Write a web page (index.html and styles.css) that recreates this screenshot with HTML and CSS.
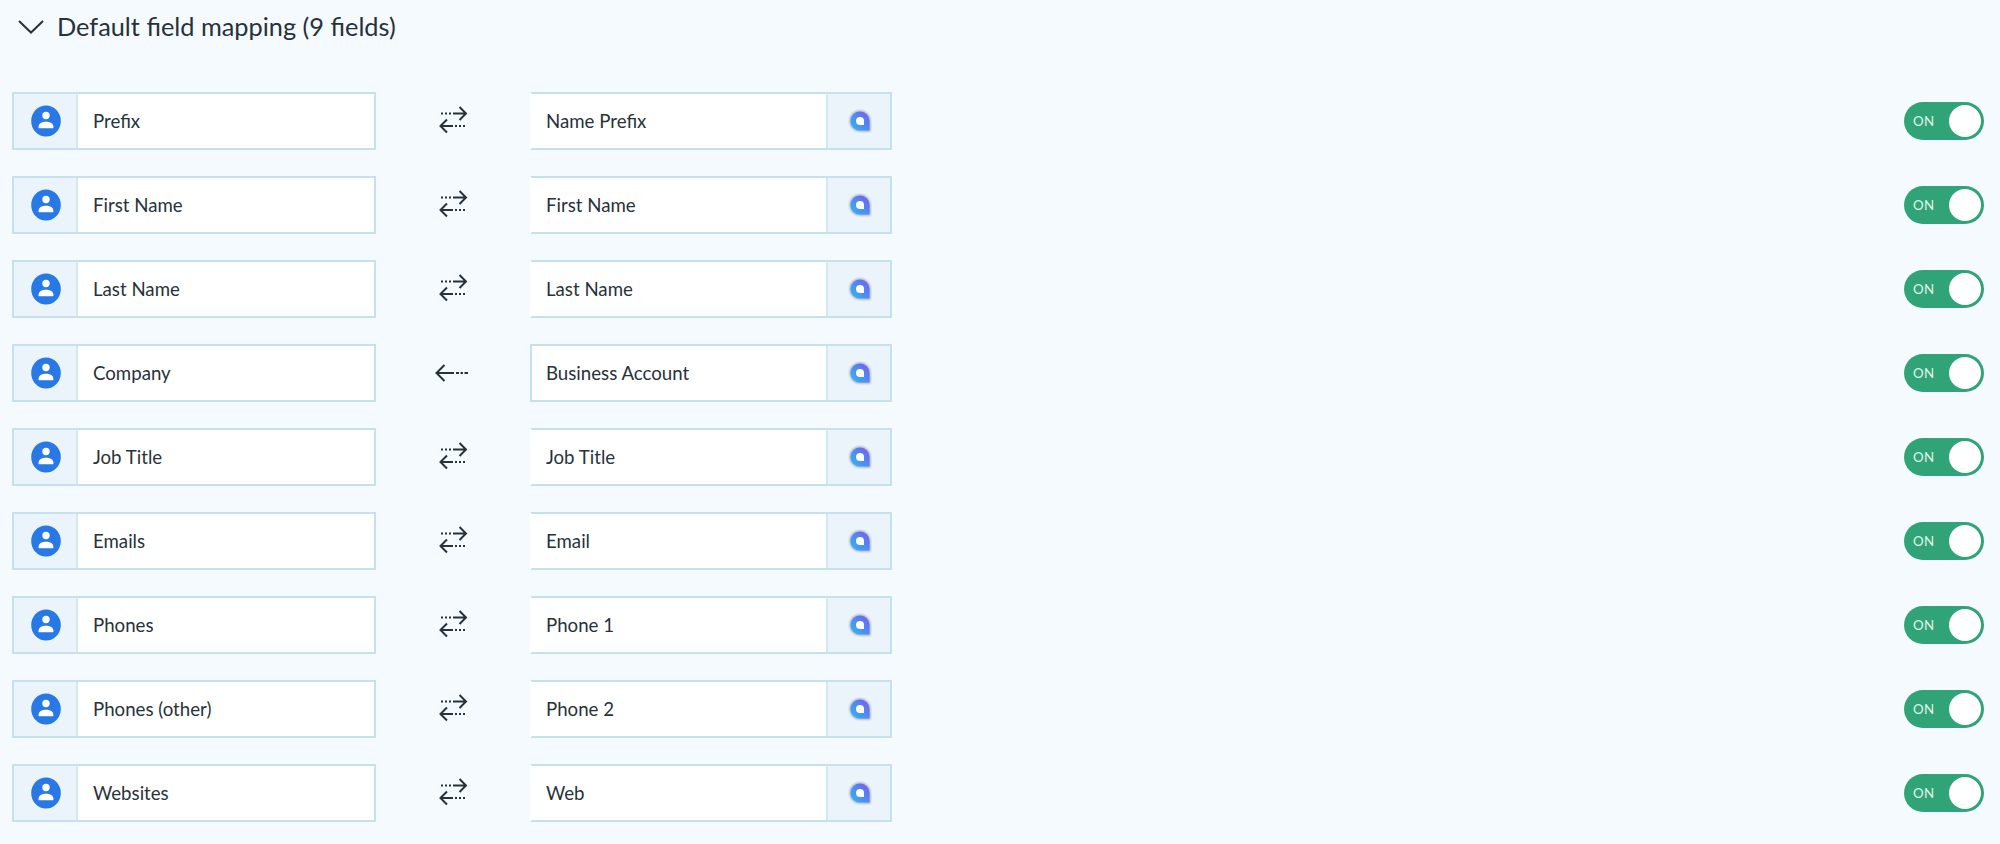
FILE: index.html
```html
<!DOCTYPE html>
<html lang="en">
<head>
<meta charset="utf-8">
<title>Default field mapping</title>
<link rel="stylesheet" href="styles.css">
</head>
<body>
<svg class="defs" width="0" height="0" aria-hidden="true">
  <defs>
    <linearGradient id="bub" x1="0" y1="1" x2="1" y2="0">
      <stop offset="0" stop-color="#27bdf4"/>
      <stop offset="1" stop-color="#7a58f2"/>
    </linearGradient>
    <filter id="soft" x="-30%" y="-30%" width="160%" height="160%"><feGaussianBlur stdDeviation="1"/></filter>
    <symbol id="person" viewBox="0 0 30 32">
      <ellipse cx="15" cy="16" rx="14.800" ry="15.600" fill="#2878e6"/>
      <circle cx="15" cy="10.500" r="3.700" fill="#fff"/>
      <path d="M7.500 22.200c0-3.600 3.400-5.400 7.500-5.400s7.500 1.800 7.500 5.400c0 .7-.4 1.100-1 1.100h-13c-.6 0-1-.4-1-1.100z" fill="#fff"/>
    </symbol>
    <symbol id="bubble" viewBox="0 0 24 24">
      <path d="M12 1.500a10.500 10.500 0 1 0 0 21h10.500V12A10.500 10.500 0 0 0 12 1.500z" fill="#7d86a8" opacity=".7" filter="url(#soft)"/>
      <path d="M12 2.500a9.500 9.500 0 1 0 0 19h9.500V12A9.500 9.500 0 0 0 12 2.500z" fill="url(#bub)"/>
      <path d="M12 8a4 4 0 0 0 0 8h4v-4a4 4 0 0 0-4-4z" fill="#fff"/>
    </symbol>
    <symbol id="both" viewBox="0 0 32 32">
      <path d="M4 8.500h2M8 8.500h2M12 8.500h2" stroke="#27323a" stroke-width="2" fill="none"/>
      <path d="M16 8.500h13M22.500 2l6.500 6.500-6.500 6.500" stroke="#27323a" stroke-width="2" fill="none"/>
      <path d="M28 21h-2M24 21h-2M20 21h-2" stroke="#27323a" stroke-width="2" fill="none"/>
      <path d="M16 21H3.500M10 14.500 3.500 21l6.500 6.500" stroke="#27323a" stroke-width="2" fill="none"/>
    </symbol>
    <symbol id="left" viewBox="0 0 40 20">
      <path d="M21 10H3.500M11.500 2l-8 8 8 8" stroke="#27323a" stroke-width="2" fill="none"/>
      <path d="M23 10h3M27.500 10H30M31.500 10H35" stroke="#27323a" stroke-width="2" fill="none"/>
    </symbol>
  </defs>
</svg>
<main class="panel">
  <header class="head">
    <svg class="chev" viewBox="0 0 26 14" width="26" height="14"><path d="M1 1l12 11.500L25 1" fill="none" stroke="#27323a" stroke-width="2"/></svg>
    <h2 class="title">Default field mapping (9 fields)</h2>
  </header>
  <div class="rows" id="rows">
    <div class="row"><div class="field"><span class="cell"><svg class="ic-person"><use href="#person"/></svg></span><span class="name">Prefix</span></div><div class="dir"><svg class="ar-both"><use href="#both"/></svg></div><div class="field field-r"><span class="name">Name Prefix</span><span class="cell"><svg class="ic-bubble"><use href="#bubble"/></svg></span></div><div class="grow"></div><div class="toggle"><span class="on">ON</span><span class="knob"></span></div></div>
    <div class="row"><div class="field"><span class="cell"><svg class="ic-person"><use href="#person"/></svg></span><span class="name">First Name</span></div><div class="dir"><svg class="ar-both"><use href="#both"/></svg></div><div class="field field-r"><span class="name">First Name</span><span class="cell"><svg class="ic-bubble"><use href="#bubble"/></svg></span></div><div class="grow"></div><div class="toggle"><span class="on">ON</span><span class="knob"></span></div></div>
    <div class="row"><div class="field"><span class="cell"><svg class="ic-person"><use href="#person"/></svg></span><span class="name">Last Name</span></div><div class="dir"><svg class="ar-both"><use href="#both"/></svg></div><div class="field field-r"><span class="name">Last Name</span><span class="cell"><svg class="ic-bubble"><use href="#bubble"/></svg></span></div><div class="grow"></div><div class="toggle"><span class="on">ON</span><span class="knob"></span></div></div>
    <div class="row"><div class="field"><span class="cell"><svg class="ic-person"><use href="#person"/></svg></span><span class="name">Company</span></div><div class="dir"><svg class="ar-left"><use href="#left"/></svg></div><div class="field field-r field-closed"><span class="name">Business Account</span><span class="cell"><svg class="ic-bubble"><use href="#bubble"/></svg></span></div><div class="grow"></div><div class="toggle"><span class="on">ON</span><span class="knob"></span></div></div>
    <div class="row"><div class="field"><span class="cell"><svg class="ic-person"><use href="#person"/></svg></span><span class="name">Job Title</span></div><div class="dir"><svg class="ar-both"><use href="#both"/></svg></div><div class="field field-r"><span class="name">Job Title</span><span class="cell"><svg class="ic-bubble"><use href="#bubble"/></svg></span></div><div class="grow"></div><div class="toggle"><span class="on">ON</span><span class="knob"></span></div></div>
    <div class="row"><div class="field"><span class="cell"><svg class="ic-person"><use href="#person"/></svg></span><span class="name">Emails</span></div><div class="dir"><svg class="ar-both"><use href="#both"/></svg></div><div class="field field-r"><span class="name">Email</span><span class="cell"><svg class="ic-bubble"><use href="#bubble"/></svg></span></div><div class="grow"></div><div class="toggle"><span class="on">ON</span><span class="knob"></span></div></div>
    <div class="row"><div class="field"><span class="cell"><svg class="ic-person"><use href="#person"/></svg></span><span class="name">Phones</span></div><div class="dir"><svg class="ar-both"><use href="#both"/></svg></div><div class="field field-r"><span class="name">Phone 1</span><span class="cell"><svg class="ic-bubble"><use href="#bubble"/></svg></span></div><div class="grow"></div><div class="toggle"><span class="on">ON</span><span class="knob"></span></div></div>
    <div class="row"><div class="field"><span class="cell"><svg class="ic-person"><use href="#person"/></svg></span><span class="name">Phones (other)</span></div><div class="dir"><svg class="ar-both"><use href="#both"/></svg></div><div class="field field-r"><span class="name">Phone 2</span><span class="cell"><svg class="ic-bubble"><use href="#bubble"/></svg></span></div><div class="grow"></div><div class="toggle"><span class="on">ON</span><span class="knob"></span></div></div>
    <div class="row"><div class="field"><span class="cell"><svg class="ic-person"><use href="#person"/></svg></span><span class="name">Websites</span></div><div class="dir"><svg class="ar-both"><use href="#both"/></svg></div><div class="field field-r"><span class="name">Web</span><span class="cell"><svg class="ic-bubble"><use href="#bubble"/></svg></span></div><div class="grow"></div><div class="toggle"><span class="on">ON</span><span class="knob"></span></div></div>
  </div>
</main>
</body>
</html>
```
FILE: styles.css
```css
* { box-sizing: border-box; }
html, body { margin: 0; height: 100%; }
body { background: #f5fafe; font-family: Lato, "Liberation Sans", sans-serif; color: #27323a; overflow: hidden; }
.defs { display: block; height: 0; }
.panel { padding: 0 12px; }
.head { display: flex; align-items: center; height: 54px; padding-left: 6px; gap: 13px; }
.chev { flex: none; }
.title { margin: 0 0 2px; font-size: 25.33px; font-weight: 400; line-height: 52px; }
.rows { display: flex; flex-direction: column; gap: 26px; margin-top: 38px; }
.row { display: flex; align-items: center; height: 58px; }
.field { display: flex; width: 364px; height: 58px; background: #fff; border: 2px solid #c5e1ef; }
.field-r { width: 362px; border-left-color: #fff; }
.field-closed { border-left-color: #c5e1ef; }
.cell { flex: none; width: 64px; padding-left: 2px; display: flex; align-items: center; justify-content: center; background: #ebf4fa; border-right: 2px solid #d4e8f3; }
.field-r .cell { border-right: 0; border-left: 2px solid #d4e8f3; }
.name { flex: 1; font-size: 18.67px; line-height: 54px; padding-left: 15px; }
.field-r .name { padding-left: 14px; }
.dir { flex: none; width: 154px; display: flex; align-items: center; justify-content: center; }
.ic-person { width: 30px; height: 32px; }
.ic-bubble { width: 24px; height: 24px; }
.ar-both { width: 32px; height: 32px; }
.ar-left { width: 40px; height: 20px; }
.grow { flex: 1; }
.toggle { flex: none; width: 80px; height: 38px; border-radius: 19px; background: #31a477; display: flex; align-items: center; justify-content: space-between; padding: 0 3px 0 9px; margin-right: 4px; }
.on { font-size: 13.33px; color: #e2f4ec; letter-spacing: .3px; }
.knob { width: 32px; height: 32px; border-radius: 50%; background: #fff; }
```
